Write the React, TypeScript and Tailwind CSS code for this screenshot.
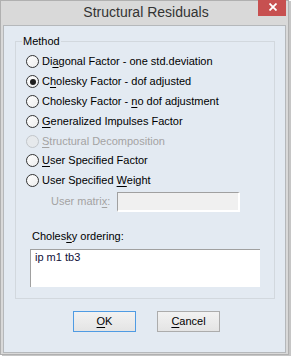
import React from "react";

type RadioRowProps = {
  label: React.ReactNode;
  checked?: boolean;
  disabled?: boolean;
};

const RadioRow = ({ label, checked = false, disabled = false }: RadioRowProps) => {
  return (
    <div className="flex items-center h-[19.8px] pl-[10px]">
      <span
        className={
          disabled
            ? "flex items-center justify-center w-[13px] h-[13px] rounded-full border border-[#c2c6ca] bg-[#e6e9ec]"
            : "flex items-center justify-center w-[13px] h-[13px] rounded-full border border-[#333333] bg-gradient-to-br from-white to-[#ececec]"
        }
      >
        {checked && <span className="w-[6px] h-[6px] rounded-full bg-[#1e1e1e]" />}
      </span>
      <span className={disabled ? "ml-[3px] text-[#a3a3a3]" : "ml-[3px] text-black"}>{label}</span>
    </div>
  );
};

// mnemonic underline, like the windows dialogs draw it
const M = ({ children }: { children: React.ReactNode }) => (
  <span className="underline underline-offset-[2px] decoration-[1px]">{children}</span>
);

const App = () => {
  return (
    <div className="w-[291px] h-[356px] bg-white font-['Liberation_Sans',Arial,sans-serif] text-[11px] leading-[13px] text-black">
      <div className="w-[289px] h-[355px] flex flex-col border border-[#b0b0b0] bg-[#d9d9d9] px-[2px] pb-[1px] shadow-[2px_1px_0_#c6c6c6]">
        {/* title bar */}
        <div className="flex h-[24px] shrink-0">
          <div className="w-[31px]" />
          <div className="flex-1 text-center text-[14px] leading-[22px] text-[#333333]">
            Structural Residuals
          </div>
          <div className="flex items-center justify-center w-[28px] h-[16px] -mt-[1px] bg-[#c75050]">
            <svg width="8" height="8" viewBox="0 0 8 8" className="ml-[2px] -mt-[2px]">
              <path d="M0.5 0.5 L7.5 7.5 M7.5 0.5 L0.5 7.5" stroke="white" strokeWidth="1.8" />
            </svg>
          </div>
        </div>

        {/* client area */}
        <div className="flex-1 flex flex-col border border-[#b5b8bb] bg-[#e3eaf2]">
          <fieldset className="mt-[9px] ml-[11px] w-[260px] border border-[#d2d8de] pb-[11px]">
            <legend className="ml-[6px] px-[1px] leading-[13px]">Method</legend>
            <div className="pt-[4px]">
              <RadioRow label={<>Di<M>a</M>gonal Factor - one std.deviation</>} />
              <RadioRow checked label={<>C<M>h</M>olesky Factor - dof adjusted</>} />
              <RadioRow label={<>Cholesky Factor - <M>n</M>o dof adjustment</>} />
              <RadioRow label={<><M>G</M>eneralized Impulses Factor</>} />
              <RadioRow disabled label={<><M>S</M>tructural Decomposition</>} />
              <RadioRow label={<><M>U</M>ser Specified Factor</>} />
              <RadioRow label={<>User Specified <M>W</M>eight</>} />
            </div>

            <div className="flex items-center mt-[1px] h-[20px]">
              <span className="w-[101px] pl-[35px] text-[#a3a3a3]">
                User matri<M>x</M>:
              </span>
              <div className="w-[123px] h-[20px] bg-[#f0f0f0] border-t border-l border-[#a0a0a0] border-r-2 border-b-2 border-r-white border-b-white" />
            </div>

            <div className="mt-[18px] pl-[16px]">
              Choles<M>k</M>y ordering:
            </div>
            <div className="mt-[6px] mx-[14px] h-[38px] bg-white border-t border-l border-[#a0a0a0] pl-[4px] pt-[1px] text-[#10103a]">
              ip m1 tb3
            </div>
          </fieldset>

          <div className="flex mt-[12px] pl-[69px] gap-[21px]">
            <button className="w-[63px] h-[21px] border border-[#4f9be3] bg-gradient-to-b from-[#f2f2f2] to-[#e4e4e4] text-[11px] leading-[13px] text-black">
              <M>O</M>K
            </button>
            <button className="w-[63px] h-[21px] border border-[#acacac] bg-gradient-to-b from-[#f2f2f2] to-[#e4e4e4] text-[11px] leading-[13px] text-black">
              <M>C</M>ancel
            </button>
          </div>
        </div>
      </div>
    </div>
  );
};

export default App;
